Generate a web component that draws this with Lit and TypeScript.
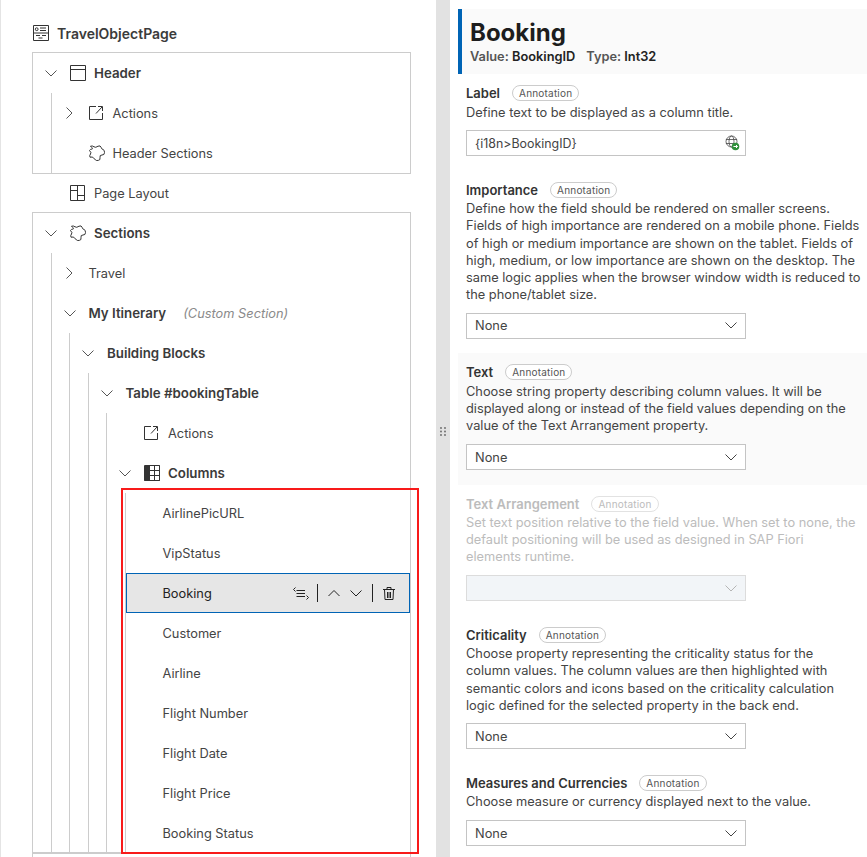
import { LitElement, html, css, svg, nothing } from 'lit';
import { customElement } from 'lit/decorators.js';

type TreeNode = {
  label: string;
  icon?: string;
  twisty?: 'open' | 'closed';
  bold?: boolean;
  note?: string;
  selected?: boolean;
  children?: TreeNode[];
};

const line = (d: string) => svg`<path d=${d} fill="none" stroke="currentColor" stroke-width="1"/>`;

const icons: Record<string, unknown> = {
  page: svg`${line('M.5.5h15v15H.5zM.5 8h15M7 3h6M7 5.5h6M3 10.5h4M9 10.5h4M5.5 13h4')}<circle cx="3.7" cy="4.2" r="1.4" fill="none" stroke="currentColor"/>`,
  header: line('M.5.5h15v15H.5zM.5 4.5h15'),
  exit: line('M7 1.5H.5v13h13V8M7 8.5l6-6.5M9 1.500h4.500V6'),
  sections: line('M1.500 1.200Q3.500.5 5 1.800T9 1.200Q11.500.2 12 2.200T14 4.500 15.500 7.500 13 10 11 12.500 9.500 15.300Q7.500 16 6.500 15T4.500 12.800 1 12.200Q.2 10.500 1.500 9T.4 5.500Q1.500 4 3 4T1.500 1.200z'),
  layout: line('M.5.5h14v15H.5zM7.500.5v15M7.500 10.500h7M.5 5.500h7'),
  table: svg`<rect width="16" height="16" rx="1" fill="currentColor"/><path d="M6 1h9v14H6z" fill="#fff"/><path d="M5.500 0v16M10.500 0v16M0 5.500h16M0 10.500h16" stroke="currentColor" fill="none"/><path d="M15.500 .5v15H.5" stroke="currentColor" fill="none"/>`,
};

const chevron = (dir: 'down' | 'right' | 'up') => {
  const d = dir === 'down' ? 'M.5.5 6 6 11.500.5' : dir === 'up' ? 'M.5 6 6 .5 11.500 6' : 'M.5.5 6 6 .5 11.500';
  const [w, h] = dir === 'right' ? [7, 12] : [12, 7];
  return html`<svg class="chev" width=${w} height=${h} viewBox="0 0 ${w} ${h}">
    <path d=${d} fill="none" stroke="currentColor" />
  </svg>`;
};

const columns = [
  'AirlinePicURL',
  'VipStatus',
  'Booking',
  'Customer',
  'Airline',
  'Flight Number',
  'Flight Date',
  'Flight Price',
  'Booking Status',
].map((label): TreeNode => ({ label, selected: label === 'Booking' }));

const headerNode: TreeNode = {
  label: 'Header',
  icon: 'header',
  twisty: 'open',
  bold: true,
  children: [
    { label: 'Actions', icon: 'exit', twisty: 'closed' },
    { label: 'Header Sections', icon: 'sections' },
  ],
};

const sectionsNode: TreeNode = {
  label: 'Sections',
  icon: 'sections',
  twisty: 'open',
  bold: true,
  children: [
    { label: 'Travel', twisty: 'closed' },
    {
      label: 'My Itinerary',
      twisty: 'open',
      bold: true,
      note: '(Custom Section)',
      children: [
        {
          label: 'Building Blocks',
          twisty: 'open',
          bold: true,
          children: [
            {
              label: 'Table #bookingTable',
              twisty: 'open',
              bold: true,
              children: [
                { label: 'Actions', icon: 'exit' },
                { label: 'Columns', icon: 'table', twisty: 'open', bold: true, children: columns },
              ],
            },
          ],
        },
      ],
    },
  ],
};

type Field = {
  label: string;
  desc: string;
  value?: string;
  text?: boolean;
  tinted?: boolean;
  disabled?: boolean;
};

const fields: Field[] = [
  { label: 'Label', desc: 'Define text to be displayed as a column title.', value: '{i18n>BookingID}', text: true },
  {
    label: 'Importance',
    desc: 'Define how the field should be rendered on smaller screens. Fields of high importance are rendered on a mobile phone. Fields of high or medium importance are shown on the tablet. Fields of high, medium, or low importance are shown on the desktop. The same logic applies when the browser window width is reduced to the phone/tablet size.',
    value: 'None',
  },
  {
    label: 'Text',
    desc: 'Choose string property describing column values. It will be displayed along or instead of the field values depending on the value of the Text Arrangement property.',
    value: 'None',
    tinted: true,
  },
  {
    label: 'Text Arrangement',
    desc: 'Set text position relative to the field value. When set to none, the default positioning will be used as designed in SAP Fiori elements runtime.',
    disabled: true,
  },
  {
    label: 'Criticality',
    desc: 'Choose property representing the criticality status for the column values. The column values are then highlighted with semantic colors and icons based on the criticality calculation logic defined for the selected property in the back end.',
    value: 'None',
  },
  { label: 'Measures and Currencies', desc: 'Choose measure or currency displayed next to the value.', value: 'None' },
];

@customElement('app-root')
export class AppRoot extends LitElement {
  static styles = css`
    :host {
      display: flex;
      height: 857px;
      overflow: hidden;
      background: #fff;
      font-family: Inter, 'Liberation Sans', sans-serif;
      font-size: 12.8px;
      color: #444;
    }

    /* outline tree */
    .outline {
      position: relative;
      box-sizing: border-box;
      width: 436px;
      flex: none;
      padding: 14px 25px 0 31px;
      border-left: 1px solid #e4e4e4;
    }
    .root {
      display: flex;
      align-items: center;
      gap: 8px;
      height: 38px;
      padding-left: 1px;
      font-size: 14px;
      font-weight: 600;
      color: #3b3b3b;
    }
    .box {
      border: 1px solid #ccc;
    }
    .box.last {
      box-sizing: border-box;
      height: 641px;
    }
    .layout-row {
      height: 38px;
      padding-left: 1px;
    }
    .row {
      display: flex;
      align-items: center;
      height: 40px;
    }
    .row.selected {
      background: #e6e6e6;
      color: #222;
      outline: 1px solid #0064b5;
      outline-offset: -1px;
    }
    .layout-row .row {
      height: 38px;
    }
    .twisty {
      flex: none;
      width: 37px;
      display: flex;
      justify-content: center;
      padding-right: 1px;
      box-sizing: border-box;
      color: #555;
    }
    .chev {
      display: block;
    }
    .icon {
      flex: none;
      display: block;
      color: #333;
      margin-right: 8px;
    }
    .bold {
      font-size: 13.3px;
      font-weight: 600;
      color: #3b3b3b;
    }
    .note {
      margin-left: 17px;
      font-style: italic;
      color: #8a8a8a;
    }
    .children {
      margin-left: 17.5px;
      border-left: 1px solid #ccc;
    }
    .toolbar {
      display: flex;
      align-items: center;
      margin-left: auto;
      padding-right: 15px;
      color: #222;
    }
    .toolbar .sep {
      width: 1px;
      height: 18px;
      background: #222;
    }
    .tool-reorder {
      margin-right: 8px;
    }
    .tool-up {
      margin: 0 10px;
    }
    .tool-down {
      margin-right: 10px;
    }
    .tool-delete {
      margin-left: 10px;
    }
    .marker {
      position: absolute;
      left: 120px;
      top: 488px;
      width: 298px;
      height: 366px;
      box-sizing: border-box;
      border: 2px solid #f81a1a;
      pointer-events: none;
    }

    .splitter {
      flex: none;
      width: 14px;
      background: #e2e2e2;
      display: flex;
      align-items: center;
      justify-content: center;
      color: #666;
      padding-top: 5px;
      box-sizing: border-box;
    }

    /* properties */
    .props {
      flex: 1;
      min-width: 0;
      padding: 9px 0 0 8px;
    }
    .head {
      box-sizing: border-box;
      height: 65px;
      padding: 8px 0 0 8px;
      background: #fafafa;
      border-left: 4px solid #0064b5;
    }
    .head h1 {
      margin: 0;
      font-size: 24px;
      line-height: 32px;
      font-weight: 700;
      color: #1d1d1d;
    }
    .meta {
      display: flex;
      gap: 11px;
      line-height: 15px;
      font-weight: 600;
      color: #555;
    }
    .meta b {
      font-weight: 600;
      color: #222;
    }
    .field {
      padding: 10px 6px 14.5px 8px;
    }
    .field.tinted {
      background: #fafafa;
    }
    .field-title {
      display: flex;
      align-items: center;
      gap: 12px;
      height: 18px;
      font-size: 13px;
      font-weight: 600;
      color: #333;
    }
    .pill {
      box-sizing: border-box;
      height: 16px;
      padding: 0 6px;
      line-height: 15px;
      border: 1px solid #ccc;
      border-radius: 8px;
      font-size: 10px;
      font-weight: 400;
      letter-spacing: 0.2px;
      color: #555;
      background: #fff;
    }
    .desc {
      margin: 1.5px 0 0;
      line-height: 17.2px;
      color: #444;
    }
    .input {
      box-sizing: border-box;
      display: flex;
      align-items: center;
      justify-content: space-between;
      width: 280px;
      height: 26px;
      margin-top: 9.5px;
      padding: 0 8px;
      border: 1px solid #c4c4c4;
      background: #fff;
      color: #444;
    }
    .input.with-globe {
      padding-right: 5px;
      font-size: 12.4px;
    }
    .field.disabled .field-title,
    .field.disabled .desc {
      color: #bcbcbc;
    }
    .field.disabled .pill {
      color: #bcbcbc;
      border-color: #e2e2e2;
    }
    .field.disabled .input {
      background: #f2f5f8;
      border-color: #dcdcdc;
      color: #b5b5b5;
      justify-content: flex-end;
    }
  `;

  private renderNode(node: TreeNode): unknown {
    return html`
      <div class="row ${node.selected ? 'selected' : ''}">
        <span class="twisty">
          ${node.twisty ? chevron(node.twisty === 'open' ? 'down' : 'right') : nothing}
        </span>
        ${node.icon
          ? html`<svg class="icon" width="16" height="16" viewBox="0 0 16 16">${icons[node.icon]}</svg>`
          : nothing}
        <span class=${node.bold ? 'bold' : ''}>${node.label}</span>
        ${node.note ? html`<span class="note">${node.note}</span>` : nothing}
        ${node.selected ? this.renderToolbar() : nothing}
      </div>
      ${node.children
        ? html`<div class="children">${node.children.map((child) => this.renderNode(child))}</div>`
        : nothing}
    `;
  }

  private renderToolbar() {
    return html`<div class="toolbar">
      <svg class="tool-reorder" width="16" height="13" viewBox="0 0 16 13">
        <path d="M2.500 .5.500 2.500l2 2M3.500 3.500h8.500M3.500 6.500h8.500M3.500 9.500h8.500M13.500 8.500l2 2-2 2" fill="none" stroke="currentColor" />
      </svg>
      <span class="sep"></span>
      <span class="tool-up">${chevron('up')}</span>
      <span class="tool-down">${chevron('down')}</span>
      <span class="sep"></span>
      <svg class="tool-delete" width="12" height="13" viewBox="0 0 12 13">
        <path d="M0 2.500h12M4 2.500V.5h4v2M1.500 2.500l.5 10h8l.5-10M4.500 5v6M6 5v6M7.500 5v6" fill="none" stroke="currentColor" />
      </svg>
    </div>`;
  }

  private renderField(f: Field) {
    const cls = `field ${f.tinted ? 'tinted' : ''} ${f.disabled ? 'disabled' : ''}`;
    return html`<section class=${cls}>
      <div class="field-title">${f.label}<span class="pill">Annotation</span></div>
      <p class="desc">${f.desc}</p>
      <div class="input ${f.text ? 'with-globe' : ''}">
        ${f.value ? html`<span>${f.value}</span>` : nothing}
        ${f.text
          ? html`<svg width="15" height="16" viewBox="0 0 15 16">
              <g fill="none" stroke="#444" stroke-width=".8">
                <circle cx="6.500" cy="6.500" r="5.500" />
                <ellipse cx="6.500" cy="6.500" rx="2.500" ry="5.500" />
                <path d="M1 4.500h11M1 8.500h11" />
              </g>
              <circle cx="10.500" cy="11.500" r="3.800" fill="#2f8f3a" />
              <path d="M8.500 11.500h4M11 10l1.500 1.500L11 13" fill="none" stroke="#fff" />
            </svg>`
          : chevron('down')}
      </div>
    </section>`;
  }

  render() {
    return html`
      <div class="outline">
        <div class="root">
          <svg class="icon" style="margin:0" width="16" height="16" viewBox="0 0 16 16">${icons.page}</svg>
          TravelObjectPage
        </div>
        <div class="box">${this.renderNode(headerNode)}</div>
        <div class="layout-row">${this.renderNode({ label: 'Page Layout', icon: 'layout' })}</div>
        <div class="box last">${this.renderNode(sectionsNode)}</div>
        <div class="box"><div class="row"></div></div>
        <div class="marker"></div>
      </div>
      <div class="splitter">
        <svg width="6" height="9" viewBox="0 0 6 9" fill="currentColor">
          <circle cx="1" cy="1" r=".9" /><circle cx="5" cy="1" r=".9" />
          <circle cx="1" cy="4.500" r=".9" /><circle cx="5" cy="4.500" r=".9" />
          <circle cx="1" cy="8" r=".9" /><circle cx="5" cy="8" r=".9" />
        </svg>
      </div>
      <div class="props">
        <div class="head">
          <h1>Booking</h1>
          <div class="meta">
            <span>Value: <b>BookingID</b></span>
            <span>Type: <b>Int32</b></span>
          </div>
        </div>
        ${fields.map((f) => this.renderField(f))}
      </div>
    `;
  }
}
